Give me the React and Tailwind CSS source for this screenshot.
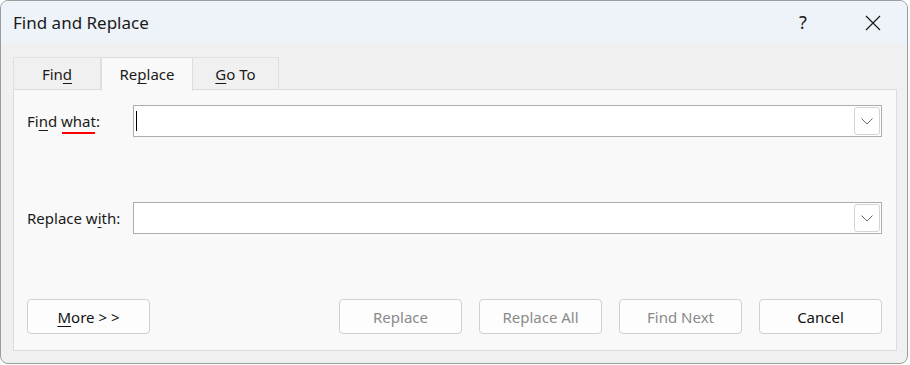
import React from "react";

const font = { fontFamily: '"Noto Sans", "Open Sans", sans-serif' };

function Chevron() {
  return (
    <svg width="12" height="7" viewBox="0 0 12 7" fill="none">
      <path d="M0.5 0.5 L6 6 L11.5 0.5" stroke="#6b6b6b" strokeWidth="1" />
    </svg>
  );
}

function Combo() {
  return (
    <div className="w-[749px] h-[32px] border border-[#adadad] bg-white flex items-center justify-between pl-[3px] pr-[1px]">
      <div className="w-[1px] h-[20px]"></div>
      <div className="w-[26px] h-[28px] border border-[#d4d4d4] rounded-[3px] bg-white flex items-center justify-center">
        <Chevron />
      </div>
    </div>
  );
}

function Btn({ children, disabled }) {
  return (
    <div
      className={
        "w-[123px] h-[35px] border border-[#d0d0d0] rounded-[4px] bg-[#fdfdfd] flex items-center justify-center text-[15px] pt-[1px] " +
        (disabled ? "text-[#8a8a8a]" : "text-[#111]")
      }
    >
      {children}
    </div>
  );
}

export default function App() {
  return (
    <div className="w-[910px] h-[365px] bg-white" style={font}>
      <div className="w-[908px] h-[364px] rounded-[8px] border border-[#9c9c9c] overflow-hidden flex flex-col bg-[#f0f0f0]">
        <div className="h-[43px] bg-[#eef2f9] flex items-center pl-[12px] shrink-0">
          <div className="text-[17px] text-[#1a1a1a] flex-1 leading-none -mt-[1px]">Find and Replace</div>
          <div className="text-[18px] text-[#1a1a1a] leading-none w-[10px] mr-[56px] -mt-[1px]">?</div>
          <svg width="16" height="16" viewBox="0 0 16 16" className="mr-[26px]">
            <path d="M1 1 L15 15 M15 1 L1 15" stroke="#1a1a1a" strokeWidth="1.2" />
          </svg>
        </div>
        <div className="pl-[12px] pt-[12px]">
          <div className="flex items-end h-[34px] relative z-10">
            <div className="w-[88px] h-[32px] border border-[#e0e0e0] border-b-0 bg-[#f0f0f0] flex items-center justify-center text-[15px] text-[#1a1a1a] mb-[1px] pt-[2px]">
              Fi<span>n</span>
              <span className="underline underline-offset-[3px]">d</span>
            </div>
            <div className="w-[92px] h-[34px] border border-[#dedede] border-b-0 bg-[#f9f9f9] flex items-center justify-center text-[15px] text-[#1a1a1a] -mb-[1px] relative">
              Re<span className="underline underline-offset-[3px]">p</span>lace
            </div>
            <div className="w-[86px] h-[32px] border border-[#e0e0e0] border-b-0 border-l-0 bg-[#f0f0f0] flex items-center justify-center text-[15px] text-[#1a1a1a] mb-[1px] pt-[2px]">
              <span className="underline underline-offset-[3px]">G</span>o To
            </div>
          </div>
          <div className="w-[884px] h-[262px] border border-[#dcdcdc] bg-[#f9f9f9] -mt-[1px] flex flex-col pl-[13px] pt-[15px]">
            <div className="flex items-center h-[32px]">
              <div className="w-[106px] text-[15px] text-[#1a1a1a] relative">
                Fi<span className="underline underline-offset-[3px]">n</span>d what:
                <div className="absolute left-[35px] top-[22px] w-[33px] h-[2px] bg-[#ff0000]"></div>
              </div>
              <div className="relative">
                <Combo />
                <div className="absolute left-[3px] top-[6px] w-[1px] h-[20px] bg-black"></div>
              </div>
            </div>
            <div className="flex items-center h-[32px] mt-[65px]">
              <div className="w-[106px] text-[15px] text-[#1a1a1a]">
                Replace w<span className="underline underline-offset-[3px]">i</span>th:
              </div>
              <Combo />
            </div>
            <div className="flex items-center mt-[65px] pr-[14px]">
              <Btn>
                <span className="underline underline-offset-[3px]">M</span>ore &gt; &gt;
              </Btn>
              <div className="flex-1"></div>
              <div className="flex gap-[17px]">
                <Btn disabled>Replace</Btn>
                <Btn disabled>Replace All</Btn>
                <Btn disabled>Find Next</Btn>
                <Btn>Cancel</Btn>
              </div>
            </div>
          </div>
        </div>
      </div>
    </div>
  );
}
